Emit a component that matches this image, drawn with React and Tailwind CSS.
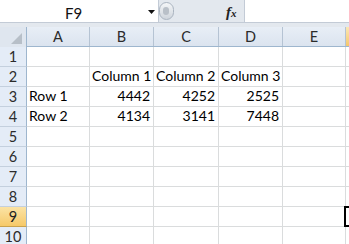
import React from "react";

const cols = [
  { key: "A", w: "w-[63px]" },
  { key: "B", w: "w-[64px]" },
  { key: "C", w: "w-[65px]" },
  { key: "D", w: "w-[64px]" },
  { key: "E", w: "w-[63px]" },
];

const data = {
  2: { B: "Column 1", C: "Column 2", D: "Column 3" },
  3: { A: "Row 1", B: "4442", C: "4252", D: "2525" },
  4: { A: "Row 2", B: "4134", C: "3141", D: "7448" },
};

const isNum = (v) => /^\d+$/.test(v);

const FormulaBar = () => (
  <div className="flex h-[23px] bg-[#e3e8ee] border-b border-[#c3cbd6]">
    <div className="relative flex items-center w-[159px] bg-white border-r border-[#c3cbd6]">
      <span className="absolute left-[65px] top-[2px] text-[15px] text-[#111]">F9</span>
      <svg className="absolute left-[148px] top-[10px]" width="7" height="4" viewBox="0 0 7 4">
        <polygon points="0,0 7,0 3.5,4" fill="#111" />
      </svg>
    </div>
    <div className="relative w-[85px]">
      <div className="absolute left-[0px] top-[2px] h-[18px] w-[15px] rounded-full border border-[#aab4c0] bg-gradient-to-b from-[#f4f6f8] to-[#cfd5dc]">
        <div className="ml-[3px] mt-[4px] h-[8px] w-[6px] rounded-full bg-[#b9c0c8]" />
      </div>
      <span className="absolute left-[67px] top-[1px] font-['Liberation_Serif',serif] italic font-bold text-[15px] text-[#222]">
        f<span className="text-[11px]">x</span>
      </span>
    </div>
    <div className="flex-1 bg-white border-l border-[#c3cbd6]" />
  </div>
);

const Corner = () => (
  <div className="relative w-[27px] h-[20px] bg-[#dfe6ef] border-r border-[#9eb6ce]">
    <svg className="absolute left-[11px] top-[6px]" width="11" height="11" viewBox="0 0 11 11">
      <polygon points="11,0 11,11 0,11" fill="#b7bfc8" />
    </svg>
  </div>
);

const App = () => {
  const rows = Array.from({ length: 10 }, (_, i) => i + 1);
  return (
    <div className="w-[349px] h-[244px] overflow-hidden bg-white font-['Lato',sans-serif] text-[14px] text-black">
      <FormulaBar />
      <div className="h-[4px] bg-[#e3e8ee]" />
      <div className="flex h-[20px] border-b border-[#9eb6ce] text-[14.5px]">
        <Corner />
        {cols.map((c) => (
          <div
            key={c.key}
            className={`${c.w} flex items-center justify-center bg-gradient-to-b from-[#e8eef6] to-[#dbe4ef] border-r border-[#b5c3d3] text-[#2b2b2b]`}
          >
            {c.key}
          </div>
        ))}
        <div className="flex-1 bg-gradient-to-b from-[#fbe7b4] to-[#f4c76b]" />
      </div>
      {rows.map((r) => (
        <div key={r} className="flex h-[20px] border-b border-[#dadcdd]">
          <div
            className={`w-[27px] flex items-center justify-center border-r border-[#9eb6ce] border-b text-[14.5px] ${
              r === 9
                ? "bg-gradient-to-b from-[#fbe3a4] to-[#f6c968] border-b-[#c9a24e] text-[#222]"
                : "bg-[#e4ecf7] border-b-[#c4d0de] text-[#2b2b2b]"
            } -mb-[1px]`}
          >
            {r}
          </div>
          {cols.map((c) => {
            const v = (data[r] || {})[c.key] || "";
            return (
              <div
                key={c.key}
                className={`${c.w} flex items-end border-r border-[#dadcdd] leading-[20px] whitespace-nowrap overflow-visible ${
                  isNum(v) ? "justify-end pr-[3px]" : "justify-start pl-[2px]"
                }`}
              >
                {v}
              </div>
            );
          })}
          <div className="relative flex-1">
            {r === 9 && (
              <div className="absolute -left-[2px] -top-[1px] w-[20px] h-[21px] border-2 border-black" />
            )}
          </div>
        </div>
      ))}
    </div>
  );
};

export default App;
